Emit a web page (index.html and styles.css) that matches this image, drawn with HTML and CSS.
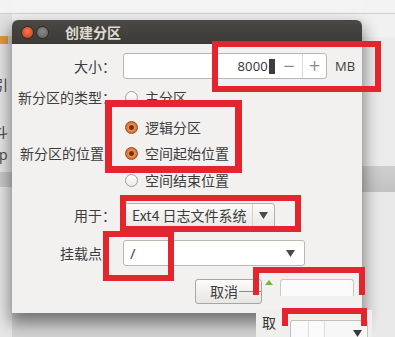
FILE: index.html
```html
<!DOCTYPE html>
<html>
<head>
<meta charset="utf-8">
<link rel="stylesheet" href="styles.css">
</head>
<body>
<div class="desk">
  <div class="side side-left">
    <div class="s-top"></div>
    <div class="s-gap"></div>
    <div class="s-orange"></div>
    <div class="s-frag f1">引</div>
    <div class="s-frag f2">斗</div>
    <div class="s-frag f3">p</div>
    <div class="s-band"></div>
  </div>
  <div class="center">
    <div class="c-top"></div>
    <div class="dialog">
      <div class="titlebar">
        <span class="wbtn close"></span>
        <span class="wbtn mini"></span>
        <span class="title">创建分区</span>
      </div>
      <div class="form">
        <div class="lbl">大小：</div>
        <div class="cell">
          <div class="spin">
            <div class="spin-field"><span class="num">8000</span><span class="caret"></span></div>
            <div class="spin-btn minus">−</div>
            <div class="spin-btn plus">+</div>
          </div>
          <span class="unit">MB</span>
        </div>

        <div class="lbl">新分区的类型：</div>
        <div class="cell"><span class="radio"></span><span class="rtext">主分区</span></div>

        <div class="lbl"></div>
        <div class="cell"><span class="radio on"></span><span class="rtext">逻辑分区</span></div>

        <div class="lbl nocolon">新分区的位置</div>
        <div class="cell"><span class="radio on"></span><span class="rtext">空间起始位置</span></div>

        <div class="lbl"></div>
        <div class="cell"><span class="radio"></span><span class="rtext">空间结束位置</span></div>

        <div class="lbl">用于：</div>
        <div class="cell">
          <div class="combo">
            <span class="combo-text">Ext4 日志文件系统</span>
            <span class="combo-arrow"><svg width="9" height="7" viewBox="0 0 9 7"><path d="M0 0H9L4.5 7Z" fill="#4a4a4a"/></svg></span>
          </div>
        </div>

        <div class="lbl">挂载点：</div>
        <div class="cell">
          <div class="entry">
            <span class="entry-text">/</span>
            <span class="entry-arrow"><svg width="9" height="7" viewBox="0 0 9 7"><path d="M0 0H9L4.5 7Z" fill="#4a4a4a"/></svg></span>
          </div>
        </div>

        <div class="lbl"></div>
        <div class="cell">
          <div class="btn">取消<span class="dash"></span></div>
        </div>
      </div>
    </div>
    <div class="c-bottom"></div>
  </div>
  <div class="side side-right">
    <div class="s-top"></div>
    <div class="s-gap light"></div>
    <div class="r-mid"></div>
    <div class="s-band r-band"></div>
  </div>
</div>

<div class="glitch-tri"></div>
<div class="glitch-box"></div>
<div class="frag-bottom">
  <span class="frag-text">取</span>
  <div class="frag-combo">
    <span class="frag-arrow"><svg width="9" height="7" viewBox="0 0 9 7"><path d="M0 0H9L4.5 7Z" fill="#3a3a3a"/></svg></span>
  </div>
</div>

<div class="mark m1"></div>
<div class="mark m2"></div>
<div class="mark m3"></div>
<div class="mark m4"></div>
<div class="mark m5"></div>
<div class="mark m6"></div>
</body>
</html>
```
FILE: styles.css
```css
html, body {
  margin: 0;
  padding: 0;
}
body {
  width: 395px;
  height: 337px;
  overflow: hidden;
  position: relative;
  background: #e4e4e4;
  font-family: "Noto Sans CJK SC", "Noto Sans", sans-serif;
  color: #3c3c3c;
}
.desk {
  display: flex;
  height: 337px;
}
.side {
  display: flex;
  flex-direction: column;
  overflow: hidden;
}
.side-left {
  width: 12px;
  background: #e6e6e6;
}
.side-right {
  flex: 1;
  background: #e9e9e9;
}
.s-top {
  height: 13px;
  background: #f3f3f3;
  border-bottom: 1px solid #cdcdcd;
  flex: none;
}
.s-gap {
  height: 22px;
  background: #e1e1e1;
  flex: none;
}
.s-gap.light {
  height: 23px;
  background: #f1f1f1;
}
.s-orange {
  height: 8px;
  background: linear-gradient(90deg, #e59a3e 0 8px, #cfcfcf 8px);
  flex: none;
}
.s-frag {
  font-size: 14px;
  line-height: 16px;
  height: 16px;
  margin-left: -6px;
  color: #444;
  flex: none;
}
.f1 { margin-top: 32px; }
.f2 { margin-top: 31px; }
.f3 {
  margin-top: 8px;
  margin-left: -1px;
  font-family: "Open Sans", sans-serif;
}
.s-band {
  height: 15px;
  margin-top: 9px;
  background: #c9c9c9;
  flex: none;
}
.r-mid {
  height: 129px;
  background: #ebebeb;
  flex: none;
}
.r-band {
  height: 26px;
  margin-top: 0;
  background: linear-gradient(#cfcfcf, #c2c2c2);
}

.center {
  width: 350px;
  display: flex;
  flex-direction: column;
  flex: none;
}
.c-top {
  height: 20px;
  background: linear-gradient(#f4f4f4 0 13px, #d2d2d2 13px 14px, #f1f1f1 14px);
  flex: none;
}
.c-bottom {
  flex: 1;
  background: #d3d3d3;
}
.dialog {
  height: 293px;
  position: relative;
  z-index: 2;
  background: #f2f1f0;
  border-radius: 6px 6px 0 0;
  box-shadow: 0 8px 16px 2px rgba(0, 0, 0, 0.45);
  display: flex;
  flex-direction: column;
  flex: none;
}
.titlebar {
  height: 24px;
  background: linear-gradient(#4a4945, #3a3935);
  border-radius: 6px 6px 0 0;
  display: flex;
  align-items: center;
  padding-left: 9px;
  flex: none;
}
.wbtn {
  width: 13px;
  height: 13px;
  border-radius: 50%;
  box-sizing: border-box;
  margin-right: 2px;
}
.close {
  background: radial-gradient(circle at 50% 40%, #f27a55, #d84a22 70%, #b83a18);
  border: 1px solid #2c2b28;
}
.mini {
  background: radial-gradient(circle at 50% 40%, #8c8a86, #6c6a66 70%, #5a5854);
  border: 1px solid #2c2b28;
}
.title {
  margin-left: 14px;
  font-size: 14px;
  font-weight: bold;
  color: #dfdbd2;
  line-height: 16px;
}

.form {
  display: grid;
  grid-template-columns: 93px 1fr;
  grid-template-rows: 26px 36px 24px 28px 26px 44px 32px 44px;
  column-gap: 10px;
  padding: 9px 0 0 8px;
}
.lbl {
  font-size: 14px;
  text-align: right;
  display: flex;
  align-items: center;
  justify-content: flex-end;
  white-space: nowrap;
  margin-right: -3px;
}
.lbl.nocolon {
  margin-right: 9px;
}
.cell {
  display: flex;
  align-items: center;
  font-size: 14px;
}

.spin {
  width: 204px;
  height: 26px;
  box-sizing: border-box;
  border: 1px solid #bab6b0;
  border-radius: 3px;
  background: #fff;
  display: flex;
}
.spin-field {
  width: 151px;
  display: flex;
  align-items: center;
  justify-content: flex-end;
  padding-right: 1px;
}
.num {
  font-family: "Open Sans", sans-serif;
  font-size: 13px;
  color: #333;
  letter-spacing: 0.2px;
}
.caret {
  width: 6px;
  height: 15px;
  background: #3d3d3d;
  margin-left: 1px;
}
.spin-btn {
  display: flex;
  align-items: center;
  justify-content: center;
  color: #8a8a8a;
  font-family: "DejaVu Sans", sans-serif;
  font-size: 15px;
}
.minus {
  width: 26px;
}
.plus {
  flex: 1;
  border-left: 1px solid #dcd9d5;
}
.unit {
  margin-left: 8px;
  font-family: "Open Sans", sans-serif;
  font-size: 13px;
  color: #3c3c3c;
}

.radio {
  width: 13px;
  height: 13px;
  box-sizing: border-box;
  border-radius: 50%;
  border: 1px solid #a19d97;
  background: linear-gradient(#ffffff, #ebeae8);
  margin-left: 2px;
  flex: none;
}
.radio.on {
  border: 1px solid #9c4a1c;
  background: radial-gradient(circle, #7c300c 0 2px, #e8925a 3px, #d8733a 5px, #c0602a 100%);
}
.rtext {
  margin-left: 7px;
}

.combo {
  width: 152px;
  height: 25px;
  box-sizing: border-box;
  border: 1px solid #b3afa9;
  border-radius: 3px;
  background: linear-gradient(#fbfbfa, #e9e8e6);
  display: flex;
  align-items: center;
}
.combo-text {
  padding-left: 8px;
  width: 120px;
  white-space: nowrap;
  font-size: 14px;
}
.combo-arrow {
  flex: 1;
  height: 100%;
  border-left: 1px solid #d5d2ce;
  display: flex;
  align-items: center;
  justify-content: center;
}
.entry {
  width: 182px;
  height: 26px;
  box-sizing: border-box;
  border: 1px solid #bab6b0;
  border-radius: 3px;
  background: #fff;
  display: flex;
  align-items: center;
}
.entry-text {
  flex: 1;
  padding-left: 6px;
  font-family: "Open Sans", sans-serif;
  font-size: 15px;
}
.entry-arrow {
  width: 28px;
  display: flex;
  justify-content: center;
}
.btn {
  margin-left: 72px;
  width: 67px;
  height: 25px;
  box-sizing: border-box;
  border: 1px solid #aaa6a0;
  border-radius: 3px;
  background: linear-gradient(#fcfcfb, #e6e5e3);
  display: flex;
  align-items: center;
  padding-left: 14px;
  font-size: 14px;
}
.dash {
  width: 22px;
  height: 1px;
  background: #8a8a8a;
  margin-left: 1px;
}

.glitch-tri {
  position: absolute;
  left: 265px;
  top: 280px;
  width: 0;
  height: 0;
  border-left: 4px solid transparent;
  border-right: 4px solid transparent;
  border-bottom: 5px solid #6dbb3a;
  z-index: 3;
}
.glitch-box {
  position: absolute;
  left: 280px;
  top: 279px;
  width: 74px;
  height: 17px;
  box-sizing: border-box;
  border: 1px solid #c9c6c2;
  border-bottom: none;
  border-radius: 3px 3px 0 0;
  background: #fbfbfb;
  z-index: 3;
}
.frag-bottom {
  position: absolute;
  left: 256px;
  top: 310px;
  width: 116px;
  height: 27px;
  overflow: hidden;
  background: #efefee;
  z-index: 3;
}
.frag-text {
  position: absolute;
  left: 6px;
  top: 4px;
  font-size: 14px;
  line-height: 16px;
  color: #333;
}
.frag-combo {
  position: absolute;
  left: 34px;
  top: 10px;
  width: 78px;
  height: 17px;
  box-sizing: border-box;
  border: 1px solid #c3c0bb;
  border-bottom: none;
  border-radius: 3px 3px 0 0;
  background: linear-gradient(90deg, #fafafa 0 17px, #dcdcdc 17px 18px, #fafafa 18px 33px, #dcdcdc 33px 34px, #f7f7f7 34px);
}
.frag-arrow {
  position: absolute;
  right: 5px;
  top: 9px;
  display: flex;
}

.mark {
  position: absolute;
  border: 6px solid #e3262d;
  box-sizing: border-box;
  z-index: 5;
}
.m1 { left: 212px; top: 41px; width: 169px; height: 51px; }
.m2 { left: 105px; top: 100px; width: 137px; height: 73px; border-width: 7px; }
.m3 { left: 120px; top: 195px; width: 181px; height: 37px; }
.m4 { left: 103px; top: 231px; width: 71px; height: 50px; }
.m5 { left: 253px; top: 267px; width: 112px; height: 28px; border-bottom: none; }
.m6 { left: 282px; top: 308px; width: 85px; height: 18px; border-bottom: none; }
```
